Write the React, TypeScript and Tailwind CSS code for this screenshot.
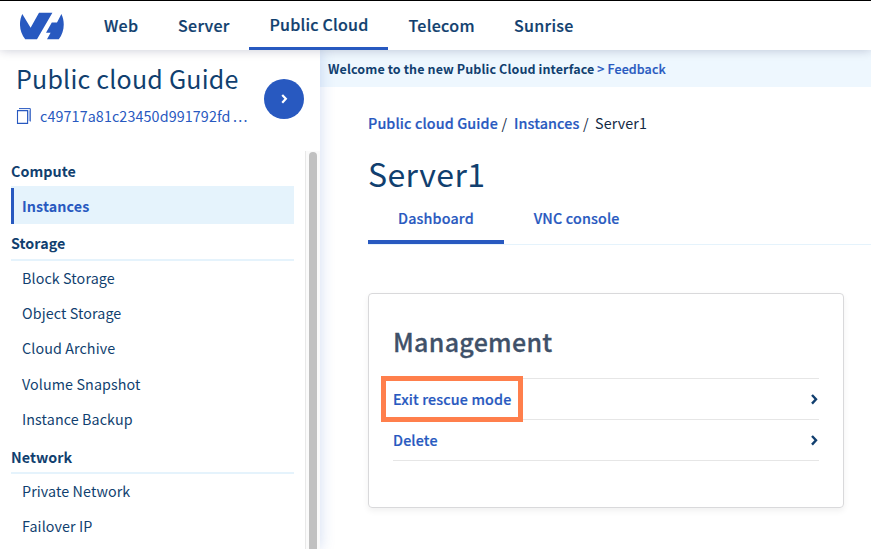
import React from "react";

const Chevron = ({ className }: { className: string }) => (
  <svg viewBox="0 0 7 11" className={className} fill="none" stroke="currentColor" strokeWidth="2.4">
    <path d="M1 1 L5 5.2 L1 9.6" />
  </svg>
);

const Logo = () => (
  <svg viewBox="0 0 44 28" className="h-7 w-11" fill="#2859c0">
    <path d="M2.3 2 L10.6 15.8 L19 0.8 H32.4 L17 27.3 H5.2 C-0.7 20 -1.5 10 2.3 2 Z" />
    <path d="M41.4 2 C45.2 10 44.4 20 38.8 27.3 H27 L30.6 20.8 H26 L31.8 10.6 H37 Z" />
  </svg>
);

const CopyIcon = () => (
  <svg viewBox="0 0 15 16" className="mr-[9px] h-4 w-[15px]" fill="none" stroke="currentColor">
    <path d="M12.5 2.5 H14 V13 H12.5 Z" fill="#a9bfec" stroke="none" />
    <path d="M3 0.6 H14.3 V13.5" strokeWidth="1" />
    <path d="M1.5 2.6 H11.6 V15.4 H1.5 Z" strokeWidth="1.1" />
  </svg>
);

const sections = [
  { title: "Compute", heading: "h-[37px]", items: ["Instances"] },
  {
    title: "Storage",
    heading: "h-[37.4px]",
    items: ["Block Storage", "Object Storage", "Cloud Archive", "Volume Snapshot", "Instance Backup"],
  },
  { title: "Network", heading: "h-[37px]", items: ["Private Network", "Failover IP"] },
];

function Header() {
  return (
    <header className="relative z-20 flex h-[50px] shrink-0 border-t border-black bg-white pl-5 text-[16px] font-medium tracking-[0.3px] shadow-[0_0_10px_rgba(0,14,60,0.22)] [-webkit-text-stroke:0.2px]">
      <div className="mt-[11px] w-11">
        <Logo />
      </div>
      <nav className="flex leading-[48px]">
        <a className="ml-10 w-[74px]">Web</a>
        <a className="w-[71px]">Server</a>
        <a className="w-[139px] border-b-[3px] border-[#2859c0] pl-[20.5px] leading-[46px] tracking-[0.2px]">Public Cloud</a>
        <a className="ml-[20.5px] w-[105.5px]">Telecom</a>
        <a>Sunrise</a>
      </nav>
    </header>
  );
}

function Sidebar() {
  return (
    <aside className="relative z-10 flex w-80 shrink-0 flex-col bg-white shadow-[0_0_14px_rgba(40,89,192,0.22)]">
      <div className="flex h-[101px] shrink-0 justify-between pl-4 pr-4">
        <div className="pt-[11px]">
          <h2 className="text-[25px] leading-[34px] tracking-[0.22px]">Public cloud Guide</h2>
          <div className="mt-[11px] flex items-center text-[14.3px] leading-[20px] text-[#2859c0]">
            <CopyIcon />
            <span className="tracking-[0.12px]">c49717a81c23450d991792fd</span>
            <span className="ml-[2.5px] tracking-[1.3px]">...</span>
          </div>
        </div>
        <button className="mt-[29px] flex size-10 items-center justify-center rounded-full bg-[#2859c0] text-white">
          <Chevron className="h-[10px] w-[7px]" />
        </button>
      </div>
      <div className="flex min-h-0 flex-1">
        <div className="w-[305px] overflow-hidden pl-[11px] pr-[11px] text-[14.3px] tracking-[0.1px]">
          {sections.map((s) => (
            <section key={s.title}>
              <h3 className={`${s.heading} border-b-2 border-[#e5f3fc] pt-[9.6px] font-bold leading-[19px] tracking-[0.05px]`}>{s.title}</h3>
              {s.items.map((it) =>
                it === "Instances" ? (
                  <div key={it} className="h-[35.6px] border-l-[3px] border-[#2859c0] bg-[#e5f3fc] pl-2 font-bold leading-[35px] text-[#2859c0]">
                    {it}
                  </div>
                ) : (
                  <div key={it} className="h-[35.2px] pl-[11px] leading-[33px]">
                    {it}
                  </div>
                )
              )}
            </section>
          ))}
        </div>
        <div className="flex w-[15px] justify-center border-l border-[#e8e8e8] bg-[#fafafa] pt-px">
          <div className="w-2 rounded-t-full bg-[#c1c1c1]" />
        </div>
      </div>
    </aside>
  );
}

function Row({ label, highlighted }: { label: string; highlighted?: boolean }) {
  return (
    <div className="relative flex h-[41px] items-center justify-between border-b border-[#e6e6e6] text-[14.3px] font-medium tracking-[0.14px] text-[#2859c0]">
      <span className="[-webkit-text-stroke:0.2px]">{label}</span>
      <Chevron className="mr-px h-[11px] w-[7px] text-[#113f6f]" />
      {highlighted && <div className="absolute -left-3 -top-[3px] h-[46px] w-[142px] border-5 border-[#ff7f4c]" />}
    </div>
  );
}

function Main() {
  return (
    <main className="min-w-0 flex-1">
      <div className="flex h-[37px] items-center bg-[#eef7fe] pl-2 text-[12.5px] leading-[36px] tracking-[0.11px]">
        <span className="font-bold">Welcome to the new Public Cloud interface</span>
        <span className="ml-[3px] font-medium text-[#2859c0] [-webkit-text-stroke:0.2px]">&gt; Feedback</span>
      </div>
      <div className="pl-12">
        <div className="flex pt-[26px] text-[14.3px] font-medium leading-5 tracking-[0.12px] text-[#2859c0]">
          <span className="w-[133.5px] [-webkit-text-stroke:0.2px]">Public cloud Guide</span>
          <span className="w-[12.5px] font-normal text-[#122844]">/</span>
          <span className="w-[69px] [-webkit-text-stroke:0.2px]">Instances</span>
          <span className="w-3 font-normal text-[#122844]">/</span>
          <span className="font-normal text-[#122844]">Server1</span>
        </div>
        <h1 className="mt-[19px] text-[32px] leading-[42px] tracking-[0.4px]">Server1</h1>
        <div className="mt-[11px] flex h-[40px] border-b border-[#e5f3fc] text-[14.3px] font-medium leading-[26px] tracking-[0.16px] text-[#2859c0] [-webkit-text-stroke:0.2px]">
          <div className="h-[39px] w-[136px] border-b-4 border-[#2859c0] pl-[30px]">Dashboard</div>
          <div className="ml-[29.7px]">VNC console</div>
        </div>
        <section className="mt-12 h-[215px] w-[476px] rounded-[4px] border border-[#d9d9db] px-6 shadow-[0_3px_6px_rgba(0,0,0,0.06)]">
          <h2 className="h-[85px] border-b border-[#e6e6e6] pt-[30px] text-[25px] font-medium leading-[34px] tracking-[0.3px] text-[#3f5169] [-webkit-text-stroke:0.3px]">Management</h2>
          <Row label="Exit rescue mode" highlighted />
          <Row label="Delete" />
        </section>
      </div>
    </main>
  );
}

export default function App() {
  return (
    <div className="flex h-[549px] w-[871px] flex-col overflow-hidden whitespace-nowrap bg-white font-['Noto_Sans_CJK_SC',sans-serif] text-[#113f6f]">
      <Header />
      <div className="flex min-h-0 flex-1">
        <Sidebar />
        <Main />
      </div>
    </div>
  );
}
